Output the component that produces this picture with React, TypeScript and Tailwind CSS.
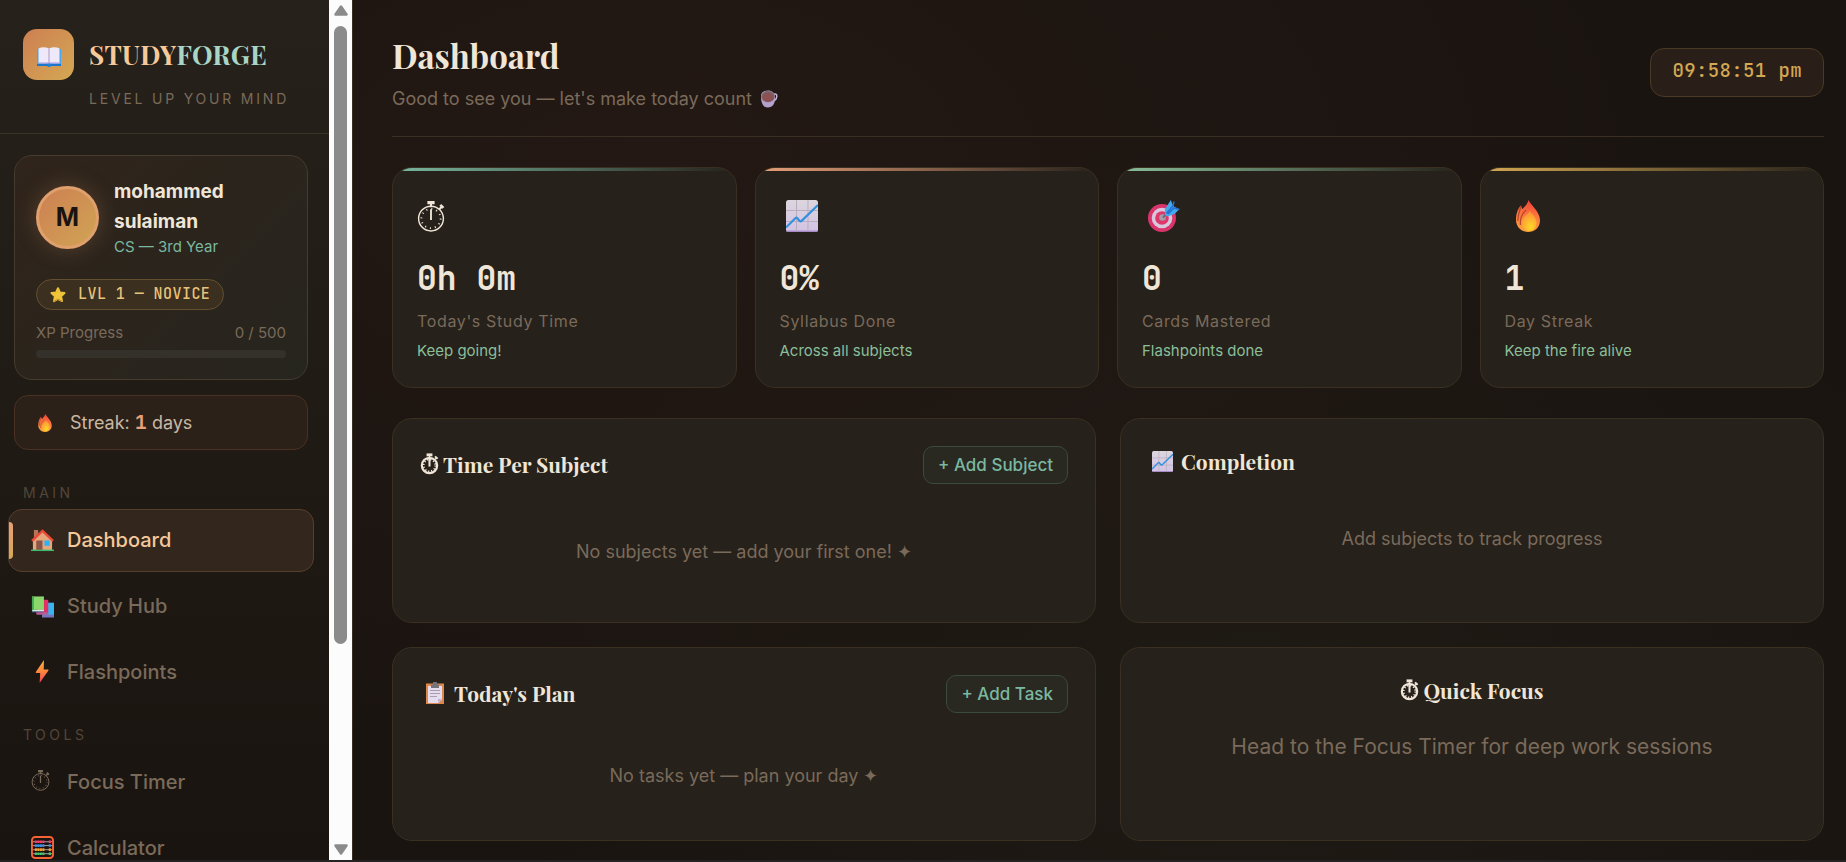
import type { ReactNode } from 'react';

type IconProps = { className?: string };

function StopwatchIcon({ className, bold = false }: IconProps & { bold?: boolean }) {
  return (
    <svg viewBox="0 0 26 30" className={className} fill="none" stroke="currentColor" aria-hidden="true">
      <circle cx="13" cy="17" r={bold ? 10.5 : 12} strokeWidth={bold ? 3 : 1.4} />
      <path d={bold ? 'M9 2.5h8' : 'M9.500 1.500h7'} strokeWidth={bold ? 4 : 3.4} />
      <path d="M13 3v3M21 8l2.500-2.500" strokeWidth="2" />
      <path d={bold ? 'M20.500 4.500l3.500 3.500' : 'M22 3.700l3 3'} strokeWidth="2.500" />
      <circle cx="13" cy="17" r={bold ? 8 : 9.3} strokeWidth={bold ? 2.4 : 1.8} strokeDasharray={bold ? '1.600 2.590' : '1 3.870'} />
      <path d="M13 8v10.500" strokeWidth={bold ? 2.8 : 1.8} />
    </svg>
  );
}

function ChartIcon({ className }: IconProps) {
  return (
    <svg viewBox="0 0 32 32" className={className} aria-hidden="true">
      <defs>
        <linearGradient id="chartPaper" x1="0" y1="0" x2="0" y2="1">
          <stop offset="0" stopColor="#dcd6de" />
          <stop offset="1" stopColor="#d3c3e4" />
        </linearGradient>
      </defs>
      <rect width="32" height="32" rx="2.500" fill="url(#chartPaper)" />
      <path d="M0 30.500h32a2 2 0 0 1-2 1.500H2a2 2 0 0 1-2-1.500z" fill="#a78bc8" />
      <path d="M10.500 0v31M22 0v31M0 10.500h32M0 21.500h32" stroke="#b7adbd" strokeWidth="1" />
      <path d="M0 27.500l9.500-9.500q1-.8 1.900.2l2.200 2.700q1 1 2 0L32 5" stroke="#3590dd" strokeWidth="2.200" fill="none" />
    </svg>
  );
}

function TargetIcon({ className }: IconProps) {
  return (
    <svg viewBox="0 0 32 32" className={className} aria-hidden="true">
      <circle cx="14" cy="18" r="14" fill="#d9356c" />
      <circle cx="14" cy="18" r="10.300" fill="#d8c8de" />
      <circle cx="14" cy="18" r="6.800" fill="#e0376b" />
      <circle cx="14.500" cy="17.500" r="3.300" fill="#a79aa9" />
      <path d="M15 17.500l7-7" stroke="#6d6878" strokeWidth="2" />
      <path d="M17 15l-.2-5.500 6-9.500 2.200 5.700L31 9.500 26.500 14l-7 2.500z" fill="#42a9ee" />
      <path d="M18.500 13.500l6.500-7.800 1-4.200M20 14l6-6 5.500 1.500" stroke="#2272d3" strokeWidth="1.600" fill="none" />
    </svg>
  );
}

function FireIcon({ className }: IconProps) {
  return (
    <svg viewBox="0 0 26 32" className={className} aria-hidden="true">
      <defs>
        <linearGradient id="flameOuter" x1="0.6" y1="0" x2="0.5" y2="1">
          <stop offset="0" stopColor="#f3413b" />
          <stop offset="0.5" stopColor="#fb793c" />
          <stop offset="1" stopColor="#fda03c" />
        </linearGradient>
        <radialGradient id="flameInner" cx="0.6" cy="0.8" r="0.7">
          <stop offset="0" stopColor="#fdd828" />
          <stop offset="1" stopColor="#fd9638" />
        </radialGradient>
      </defs>
      <path d="M13.500 0C15 4.500 25 11 25 20.500 25 27.500 19.500 32 13 32S1 27 1 20C1 13.500 3 8 6 5.500c.3 1.700.8 2.700 1.600 3.600C9.800 6.500 12.500 4 13.500 0z" fill="url(#flameOuter)" />
      <path d="M6 6C5 11 2.500 14 3 21M11 10C6.500 14.500 5 18 5.500 25" stroke="#b9472f" strokeWidth="1.300" fill="none" />
      <path d="M15 11c1.500 3.500 6.500 5.500 6.500 11.500 0 5-3.500 8.500-7.500 8.500s-8-3.500-7.500-9C7 17.500 12.500 15 15 11z" fill="url(#flameInner)" />
    </svg>
  );
}

function BookIcon({ className }: IconProps) {
  return (
    <svg viewBox="0 0 24 20" className={className} aria-hidden="true">
      <path d="M0 2h24v17H0z" fill="#47a7ec" />
      <path d="M0 17h24v2H0z" fill="#1c76ce" />
      <path d="M1.500 1.500Q6.500-1 12 1.500q5.500-2.500 10.500 0V16H1.500z" fill="#eee8f8" />
      <path d="M12 1.500V17" stroke="#c4b4da" strokeWidth="1.600" />
      <path d="M1.500 16h21" stroke="#bda8e0" strokeWidth="1.300" />
      <path d="M10.500 16.500h3V20h-3z" fill="#2583d5" />
    </svg>
  );
}

function StarIcon({ className }: IconProps) {
  return (
    <svg viewBox="0 0 16 16" className={className} aria-hidden="true">
      <path d="M8 1.200l1.900 4.200 4.600.6-3.400 3.300.9 4.800L8 11.800 4 14.100l.9-4.800L1.500 6l4.600-.6z" fill="#f0c63a" stroke="#ecc23a" strokeWidth="2" strokeLinejoin="round" />
      <path d="M3.600 14.600L8 12.200l4.400 2.400" fill="none" stroke="#c28a25" strokeWidth="1" />
    </svg>
  );
}

function HouseIcon({ className }: IconProps) {
  return (
    <svg viewBox="0 0 24 24" className={className} aria-hidden="true">
      <path d="M3 1h4.500v10H3z" fill="#b37553" />
      <path d="M2 11.500L12 2l10 9.500V22H2z" fill="#e3a77b" />
      <path d="M1 12.500L12 2l11 10.500" fill="none" stroke="#ed4938" strokeWidth="2.500" />
      <path d="M5.500 12H12v10H5.500z" fill="#8b5548" />
      <path d="M14 12h5.500v5.500H14z" fill="#2fb2f5" />
      <path d="M0 21.500h24V23H0z" fill="#3dbb6d" />
    </svg>
  );
}

function BooksIcon({ className }: IconProps) {
  return (
    <svg viewBox="0 0 24 24" className={className} aria-hidden="true">
      <path d="M12 8h12v13.500H12z" fill="#38b5ef" />
      <path d="M11.500 20.500H24v3H11.500z" fill="#7775bd" />
      <path d="M7 5h11v13.500H7z" fill="#e22f65" />
      <path d="M5 18h13v2.500H6z" fill="#bb5896" />
      <path d="M1 1.500h12.500v14H1z" fill="#8bd76b" />
      <path d="M1 1.500h2v16H1z" fill="#44a852" />
      <path d="M1.500 15.500h12v2h-12z" fill="#d8e8e6" />
      <path d="M1 17.500h12.500" stroke="#4d6692" />
    </svg>
  );
}

function BoltIcon({ className }: IconProps) {
  return (
    <svg viewBox="0 0 24 24" className={className} aria-hidden="true">
      <defs>
        <linearGradient id="boltFill" x1="0" y1="0" x2="0" y2="1">
          <stop offset="0" stopColor="#fbb13c" />
          <stop offset="0.5" stopColor="#fb873e" />
          <stop offset="1" stopColor="#f5405a" />
        </linearGradient>
      </defs>
      <path d="M13.500 0L5 12.500q-.4 1 .6 1h4L9 24l9.200-13q.6-1-.6-1h-4.300z" fill="url(#boltFill)" />
    </svg>
  );
}

function AbacusIcon({ className }: IconProps) {
  const rows = [
    { y: 6, color: '#ef3f6b' },
    { y: 10, color: '#3b8de0' },
    { y: 14.3, color: '#f5a02f' },
    { y: 18.5, color: '#42c76f' },
  ];
  return (
    <svg viewBox="0 0 24 24" className={className} aria-hidden="true">
      <rect x="1" y="1" width="22" height="22" rx="3.500" fill="none" stroke="#f76336" strokeWidth="2" />
      {rows.map((row) => (
        <g key={row.y} stroke={row.color} strokeWidth="2.800">
          <path d={`M2 ${row.y}h20`} stroke="#d8cad5" strokeWidth="0.800" />
          <path d={`M4 ${row.y}h10`} strokeDasharray="2.200 .4" />
          <path d={`M18.500 ${row.y}h2.300`} />
        </g>
      ))}
    </svg>
  );
}

function CoffeeIcon({ className }: IconProps) {
  return (
    <svg viewBox="0 0 18 18" className={className} aria-hidden="true">
      <path d="M13 4.500q4-1.500 3.800 2-.5 4-4.500 5" fill="none" stroke="#c5b8d2" strokeWidth="1.500" />
      <path d="M1 6C1 2.500 4 .5 8 .5s7 2.500 7 6.500c.4 6-2 10.500-7 10.500S.8 13 1 6z" fill="#b5a1cb" />
      <ellipse cx="8" cy="6.500" rx="6.700" ry="5.800" fill="#78686f" />
      <ellipse cx="8" cy="7.300" rx="5.800" ry="4.700" fill="#8b5152" />
    </svg>
  );
}

function ClipboardIcon({ className }: IconProps) {
  return (
    <svg viewBox="0 0 18 22" className={className} aria-hidden="true">
      <path d="M0 1.500h18V22H0z" fill="#dc8950" />
      <path d="M2 4h14v13.500L12.500 21H2z" fill="#e5dced" />
      <path d="M16 17h-4v4z" fill="#c4afd3" />
      <path d="M5 2.500h2V0h4v2.500h2V6H5z" fill="#77717c" />
      <path d="M4 8.500h10M4 11.500h10M4 14.500h7" stroke="#a89db3" strokeWidth="1" />
    </svg>
  );
}

const NAV_SECTIONS = [
  {
    label: 'Main',
    items: [
      { name: 'Dashboard', icon: <HouseIcon className="mt-0.5 size-[23px]" />, active: true },
      { name: 'Study Hub', icon: <BooksIcon className="mt-0.5 size-[23px]" />, active: false },
      { name: 'Flashpoints', icon: <BoltIcon className="size-[23px]" />, active: false },
    ],
  },
  {
    label: 'Tools',
    items: [
      { name: 'Focus Timer', icon: <StopwatchIcon className="mb-0.5 h-[21px] w-[19px]" />, active: false },
      { name: 'Calculator', icon: <AbacusIcon className="size-[23px]" />, active: false },
    ],
  },
];

const STATS = [
  { icon: <StopwatchIcon className="h-[31px] w-7" />, value: '0h 0m', label: "Today's Study Time", note: 'Keep going!', bar: 'from-[#7ab8a0]' },
  { icon: <ChartIcon className="ml-1.5 size-8" />, value: '0%', label: 'Syllabus Done', note: 'Across all subjects', bar: 'from-[#e8a07a]' },
  { icon: <TargetIcon className="ml-1.5 size-8" />, value: '0', label: 'Cards Mastered', note: 'Flashpoints done', bar: 'from-[#8abf9a]' },
  { icon: <FireIcon className="ml-2.5 h-8 w-[26px]" />, value: '1', label: 'Day Streak', note: 'Keep the fire alive', bar: 'from-[#d4a853]' },
];

function Scrollbar() {
  return (
    <div className="flex w-[23px] shrink-0 flex-col items-center bg-[#fcfcfc] py-[5px]" aria-hidden="true">
      <svg viewBox="0 0 14 11" className="h-[11px] w-[14px]">
        <path d="M7 1.500L12.500 9.500h-11z" fill="#8b8b8b" stroke="#8b8b8b" strokeWidth="2.500" strokeLinejoin="round" />
      </svg>
      <div className="mt-[10px] w-[13px] grow-77 rounded-full bg-[#8b8b8b]" />
      <div className="grow-25" />
      <svg viewBox="0 0 14 11" className="h-[11px] w-[14px]">
        <path d="M7 9.500L12.500 1.500h-11z" fill="#8b8b8b" stroke="#8b8b8b" strokeWidth="2.500" strokeLinejoin="round" />
      </svg>
    </div>
  );
}

function Sidebar() {
  return (
    <aside className="flex h-full w-[353px] shrink-0 overflow-hidden border-r border-[#3a2f25]">
      <div className="min-w-0 flex-1 overflow-hidden bg-linear-to-b from-[#26211a] to-[#1a1410]">
        <div className="border-b border-[#3c3327] px-[23px] pt-[29px] pb-[23px]">
          <div className="flex items-center gap-[15px]">
            <div className="flex size-[51px] items-center justify-center rounded-[14px] bg-linear-to-br from-[#cd7f52] to-[#d4a853]">
              <BookIcon className="mt-1 h-5 w-6" />
            </div>
            <div className="font-['Playfair_Display','Liberation_Serif',serif] text-[26px] leading-8 font-bold tracking-[0.01em] text-[#f5c99a]">
              STUDY<span className="text-[#a8d5c5]">FORGE</span>
            </div>
          </div>
          <p className="mt-2 ml-[66px] text-[14px] leading-[22px] tracking-[0.2em] whitespace-nowrap text-[#7a6a5a]">LEVEL UP YOUR MIND</p>
        </div>

        <div className="mx-[14px] mt-[21px] rounded-[18px] border border-[#453b2e] bg-linear-135 from-[#30241b] to-[#26251e] p-[21px] mr-[21px]">
          <div className="flex items-center gap-[15px]">
            <div className="flex size-[63px] shrink-0 items-center justify-center rounded-full border-3 border-[#e0a06d] bg-linear-to-br from-[#cd7f52] to-[#d0a454] text-[25px] font-bold text-[#1a1410] shadow-[0_0_22px_rgba(212,150,100,0.25)]">
              M
            </div>
            <div>
              <div className="text-[19px] leading-[30px] font-bold text-[#f0e6d8]">mohammed sulaiman</div>
              <div className="mb-0.5 text-[15px] leading-[19px] text-[#7ab8a0]">CS — 3rd Year</div>
            </div>
          </div>
          <div className="mt-[21px] inline-flex h-[31px] items-center gap-3 rounded-full border border-[#62502f] bg-[#3b2f20] px-[13px] align-top font-['JetBrains_Mono','DejaVu_Sans_Mono',monospace] text-[15px] font-medium tracking-[0.03em] text-[#e8c37a]">
            <StarIcon className="size-4" />
            LVL 1 — NOVICE
          </div>
          <div className="mt-[11px] flex justify-between text-[15px] leading-6 text-[#7a6a5a]">
            <span>XP Progress</span>
            <span>0 / 500</span>
          </div>
          <div className="mt-[5px] h-2 rounded-full bg-[#34302a]" />
        </div>

        <div className="mt-[15px] mr-[21px] ml-[14px] flex h-[55px] items-center gap-[17px] rounded-[14px] border border-[#4c3024] bg-[#2c2118] pl-[22px] text-[18px] text-[#c9b8a4]">
          <FireIcon className="h-[18px] w-4" />
          <span>
            Streak: <b className="font-['JetBrains_Mono','DejaVu_Sans_Mono',monospace] text-[20px] leading-none font-bold text-[#e8a07a]">1</b> days
          </span>
        </div>

        <nav className="pt-3">
          {NAV_SECTIONS.map((section) => (
            <div key={section.label}>
              <h2 className="mt-[21px] mb-1.5 ml-[23px] text-[14px] leading-5 tracking-[0.25em] text-[#524639] uppercase">{section.label}</h2>
              <div className="flex flex-col gap-[3px]">
                {section.items.map((item) => (
                  <a
                    key={item.name}
                    href="#"
                    className={`relative mr-[15px] ml-2 flex h-[63px] items-center gap-3 rounded-[14px] border pb-0.5 pl-[22px] text-[20px] font-medium ${
                      item.active ? 'border-[#563e2e] bg-[#33261d] text-[#f5c99a]' : 'border-transparent text-[#7a6a5a]'
                    }`}
                  >
                    {item.active && (
                      <span className="absolute top-3 left-0 h-[37px] w-1 rounded-r bg-linear-to-b from-[#e8a07a] to-[#d4a853]" />
                    )}
                    <span className="flex w-6 shrink-0">{item.icon}</span>
                    {item.name}
                  </a>
                ))}
              </div>
            </div>
          ))}
        </nav>
      </div>
      <Scrollbar />
    </aside>
  );
}

function Panel({ children }: { children: ReactNode }) {
  return <section className="rounded-[20px] border border-[#393022] bg-[#26211a] p-[27px]">{children}</section>;
}

function PanelTitle({ children }: { children: ReactNode }) {
  return (
    <h3 className="flex items-center pb-0.5 font-['Playfair_Display','Liberation_Serif',serif] text-[21px] leading-[30px] font-bold text-[#f0e6d8]">
      {children}
    </h3>
  );
}

function AddButton({ children }: { children: ReactNode }) {
  return (
    <button type="button" className="h-[38px] rounded-[10px] border border-[#3a4a3d] bg-[#292922] px-[14px] text-[17px] font-medium text-[#7ab8a0]">
      {children}
    </button>
  );
}

export default function App() {
  return (
    <div className="flex h-screen overflow-hidden border-b-2 border-[#242222] bg-[#1a1410] font-['Inter',sans-serif] text-[#f0e6d8]">
      <Sidebar />
      <main className="min-w-0 flex-1 overflow-hidden bg-[radial-gradient(ellipse_at_20%_20%,#231814_0%,transparent_60%),radial-gradient(ellipse_at_60%_80%,#1e1a14_0%,transparent_60%)] pt-8 pr-[22px] pl-[39px]">
        <header className="flex items-start justify-between border-b border-[#3a2f23] pb-[23px]">
          <div>
            <h1 className="font-['Playfair_Display','Liberation_Serif',serif] text-[33px] leading-[46px] font-bold">Dashboard</h1>
            <p className="mt-[7px] flex items-center text-[18px] leading-7 text-[#7a6a5a]">
              Good to see you — let's make today count
              <CoffeeIcon className="ml-2 size-[18px]" />
            </p>
          </div>
          <time className="mt-4 flex h-[49px] items-center rounded-[14px] border border-[#4a3924] bg-[#2a1f18] px-[21px] pb-0.5 font-['JetBrains_Mono','DejaVu_Sans_Mono',monospace] text-[19px] font-medium tracking-[0.02em] text-[#d4a853]">
            09:58:51 pm
          </time>
        </header>

        <div className="mt-[30px] grid grid-cols-4 gap-[18px]">
          {STATS.map((stat) => (
            <div key={stat.label} className="relative overflow-hidden rounded-[20px] border border-[#393022] bg-[#26211a] px-6 pt-8 pb-6">
              <div className={`absolute inset-x-0 top-0 h-[3px] bg-linear-to-r to-transparent ${stat.bar}`} />
              <div className="flex h-8 items-center">{stat.icon}</div>
              <div className="mt-[23px] font-['JetBrains_Mono','DejaVu_Sans_Mono',monospace] text-[33px] leading-[46px] font-bold">{stat.value}</div>
              <div className="mt-1.5 text-[16px] leading-7 tracking-[0.04em] text-[#7a6a5a]">{stat.label}</div>
              <div className="mt-1 text-[15px] leading-6 text-[#8abf9a]">{stat.note}</div>
            </div>
          ))}
        </div>

        <div className="mt-[30px] grid grid-cols-2 gap-6 text-[18px] leading-[29px] text-[#7a6a5a]">
          <Panel>
            <div className="flex items-center justify-between">
              <PanelTitle>
                <StopwatchIcon bold className="mr-1 h-[22px] w-[19px]" />
                Time Per Subject
              </PanelTitle>
              <AddButton>+ Add Subject</AddButton>
            </div>
            <p className="mt-[25px] pt-7 pb-[29px] text-center">No subjects yet — add your first one! ✦</p>
          </Panel>
          <Panel>
            <PanelTitle>
              <ChartIcon className="mr-2 ml-1 size-[21px]" />
              Completion
            </PanelTitle>
            <p className="mt-[18px] py-7 text-center">Add subjects to track progress</p>
          </Panel>
          <Panel>
            <div className="flex items-center justify-between">
              <PanelTitle>
                <ClipboardIcon className="mr-2.5 ml-1.5 h-[22px] w-[18px]" />
                Today's Plan
              </PanelTitle>
              <AddButton>+ Add Task</AddButton>
            </div>
            <p className="mt-[25px] py-[23px] text-center">No tasks yet — plan your day ✦</p>
          </Panel>
          <Panel>
            <div className="flex justify-center">
              <PanelTitle>
                <StopwatchIcon bold className="mr-1 h-[22px] w-[19px]" />
                Quick Focus
              </PanelTitle>
            </div>
            <p className="mt-[25px] text-center text-[21px]">Head to the Focus Timer for deep work sessions</p>
          </Panel>
        </div>
      </main>
    </div>
  );
}
